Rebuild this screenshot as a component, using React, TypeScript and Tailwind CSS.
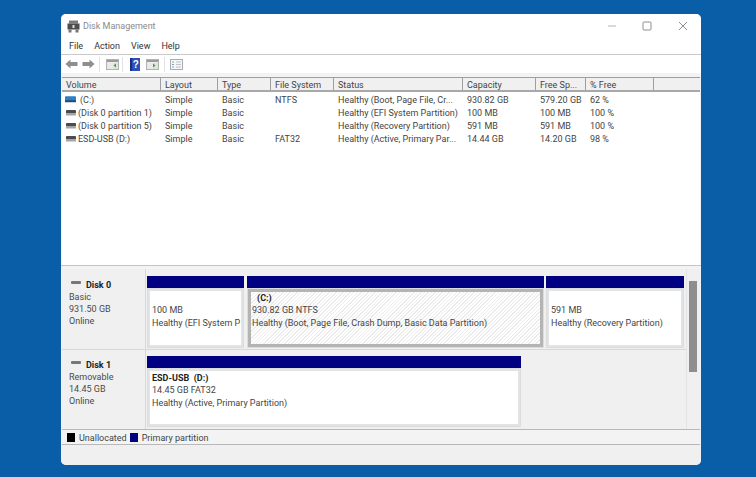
import React from "react";

const font = "[font-family:'Roboto','Noto_Sans',sans-serif]";

const cols = [
  { name: "Volume", w: "w-[99px]" },
  { name: "Layout", w: "w-[57px]" },
  { name: "Type", w: "w-[53px]" },
  { name: "File System", w: "w-[63px]" },
  { name: "Status", w: "w-[129px]" },
  { name: "Capacity", w: "w-[73px]" },
  { name: "Free Sp...", w: "w-[50px]" },
  { name: "% Free", w: "w-[68px]" },
];

const rows = [
  ["(C:)", "Simple", "Basic", "NTFS", "Healthy (Boot, Page File, Cr...", "930.82 GB", "579.20 GB", "62 %"],
  ["(Disk 0 partition 1)", "Simple", "Basic", "", "Healthy (EFI System Partition)", "100 MB", "100 MB", "100 %"],
  ["(Disk 0 partition 5)", "Simple", "Basic", "", "Healthy (Recovery Partition)", "591 MB", "591 MB", "100 %"],
  ["ESD-USB (D:)", "Simple", "Basic", "FAT32", "Healthy (Active, Primary Par...", "14.44 GB", "14.20 GB", "98 %"],
];

function DriveIcon({ blue }: { blue?: boolean }) {
  return (
    <svg width="10" height="6" viewBox="0 0 10 6" className={blue ? "shrink-0 -ml-[1px] mb-[3px] w-[11px] h-[7px]" : "shrink-0 mb-[1px]"}>
      <rect x="0" y="0" width="10" height="3.5" rx="0.8" fill={blue ? "#2f7fc4" : "#4c4c4c"} />
      <rect x="0" y="3.5" width="10" height="2" fill={blue ? "#1d4e80" : "#a5a5a5"} />
    </svg>
  );
}

function Arrow({ flip }: { flip?: boolean }) {
  return (
    <svg width="13" height="10" viewBox="0 0 13 10" className={flip ? "-scale-x-100" : ""}>
      <path d="M0.5 5 L5.5 0.5 V3 H12.5 V7 H5.5 V9.5 Z" fill="#8d8f8d" />
    </svg>
  );
}

function PaneIcon({ green }: { green: "l" | "r" }) {
  return (
    <svg width="13" height="11" viewBox="0 0 13 11">
      <rect x="0.5" y="0.5" width="12" height="10" fill="#eaeaea" stroke="#b0b0b0" />
      <rect x="1" y="1" width="11" height="2" fill="#9a9a9a" />
      <rect x="7" y="4" width="5" height="6" fill="#dfe5da" />
      <path d={green === "l" ? "M10 4.5 L7.5 6.5 L10 8.5 Z" : "M7 4.5 L9.5 6.5 L7 8.5 Z"} fill="#3da53d" />
    </svg>
  );
}

function HelpIcon() {
  return (
    <svg width="10" height="13" viewBox="0 0 10 13">
      <rect width="10" height="13" fill="#2c50b4" />
      <rect x="0" y="0" width="2" height="13" fill="#1b2f80" />
      <text x="5.8" y="10" textAnchor="middle" fontSize="10" fontWeight="700" fill="#ffffff" fontFamily="Liberation Sans">?</text>
    </svg>
  );
}

function ListIcon() {
  return (
    <svg width="13" height="11" viewBox="0 0 13 11">
      <rect x="0.5" y="0.5" width="12" height="10" fill="#f4f6f8" stroke="#a9adb2" />
      <path d="M2 3h2M2 5.5h2M2 8h2" stroke="#8aa0ba" />
      <path d="M6 3h5M6 5.5h5M6 8h5" stroke="#c0c3c7" />
    </svg>
  );
}

function AppIcon() {
  return (
    <svg width="13" height="13" viewBox="0 0 13 13">
      <rect x="2" y="0.5" width="9" height="3" fill="#7c7c7c" />
      <rect x="0.5" y="3.5" width="12" height="6" fill="#4d4d4d" />
      <rect x="1.5" y="9.5" width="3" height="3" fill="#777" />
      <rect x="8.5" y="9.5" width="3" height="3" fill="#777" />
      <rect x="5.5" y="5" width="2" height="3" fill="#ddd" />
    </svg>
  );
}

function Sep({ className }: { className: string }) {
  return <div className={`w-px h-[15px] bg-[#e2e2e2] ${className}`} />;
}

function Partition({
  w,
  hatched,
  lines,
  boxH,
}: {
  w: string;
  hatched?: boolean;
  lines: React.ReactNode;
  boxH: string;
}) {
  return (
    <div className={`${w} flex flex-col shrink-0`}>
      <div className="h-[11.5px] bg-[#000080]" />
      <div className={`${boxH} p-[1px] bg-[#dcdcdc]`}>
        <div
          className={
            hatched
              ? "h-full border-[3px] border-[#b4b4b4] px-[1px] bg-[repeating-linear-gradient(135deg,#ececec_0px,#ececec_1px,#ffffff_1px,#ffffff_2.5px)]"
              : "h-full bg-white border-[2px] border-[#e0e4e6] px-[2px] pt-[1px]"
          }
        >
          {lines}
        </div>
      </div>
    </div>
  );
}

function DiskLabel({ title, lines, top }: { title: string; lines: string[]; top: string }) {
  return (
    <div className={`w-[84px] shrink-0 bg-[#f0f0f0] border-r border-[#d8d8d8] pl-[7px] ${top} leading-[12px] text-[#4a4a4a]`}>
      <div className="flex items-center gap-[5px] font-bold text-[#222] h-[13px]">
        <svg width="10" height="4" viewBox="0 0 10 4" className="mb-[3px] ml-[2px]">
          <rect width="10" height="3" rx="1" fill="#777" />
        </svg>
        {title}
      </div>
      {lines.map((l) => (
        <div key={l}>{l}</div>
      ))}
    </div>
  );
}

export default function App() {
  return (
    <div className={`w-[756px] h-[477px] bg-[#0a5ea8] pt-[14px] pl-[61px] overflow-hidden ${font}`}>
      <div className="w-[640px] h-[451px] bg-[#f3f3f3] rounded-[5px] overflow-hidden flex flex-col text-[9px] text-[#444]">
        {/* Title bar */}
        <div className="h-[24px] bg-white flex items-center pl-[6px] shrink-0">
          <AppIcon />
          <span className="ml-[3px] pt-[1px] text-[#8a8a8a]">Disk Management</span>
          <div className="ml-auto flex items-center">
            <svg width="10" height="10" viewBox="0 0 10 10" className="mr-[25px]">
              <path d="M1 5h8" stroke="#b5b5b5" />
            </svg>
            <svg width="10" height="10" viewBox="0 0 10 10" className="mr-[26px]">
              <rect x="1" y="1" width="8" height="8" rx="1" fill="none" stroke="#8f8f8f" />
            </svg>
            <svg width="10" height="10" viewBox="0 0 10 10" className="mr-[13px]">
              <path d="M1 1l8 8M9 1l-8 8" stroke="#8f8f8f" />
            </svg>
          </div>
        </div>
        {/* Menu */}
        <div className="h-[17px] bg-white border-b border-[#c9c9c9] flex items-center pl-[8px] pt-[1px] gap-[11px] text-[#333] shrink-0">
          <span>File</span>
          <span>Action</span>
          <span>View</span>
          <span>Help</span>
        </div>
        {/* Toolbar */}
        <div className="h-[18px] bg-white flex items-center pl-[4px] shrink-0">
          <Arrow />
          <div className="w-[4px]" />
          <Arrow flip />
          <Sep className="ml-[4px] mr-[6px]" />
          <PaneIcon green="l" />
          <Sep className="ml-[3px] mr-[7px]" />
          <HelpIcon />
          <div className="w-[6px]" />
          <PaneIcon green="r" />
          <Sep className="ml-[5px] mr-[5px]" />
          <ListIcon />
        </div>
        <div className="h-[4px] bg-[#f3f3f3] shrink-0" />
        {/* List */}
        <div className="h-[188px] bg-white mx-px border-t border-[#9e9e9e] shrink-0">
          <div className="flex h-[14px] bg-[#f0f0f0] border-b-2 border-[#a8a8a8] leading-[15px]">
            {cols.map((c) => (
              <div key={c.name} className={`${c.w} shrink-0 border-r border-[#9e9e9e] pl-[4px] whitespace-nowrap overflow-hidden`}>
                {c.name}
              </div>
            ))}
          </div>
          <div className="pt-[2px]">
            {rows.map((r, i) => (
              <div key={r[0]} className="flex h-[13px] leading-[13px]">
                {r.map((cell, j) => (
                  <div key={j} className={`${cols[j].w} shrink-0 pl-[4px] whitespace-nowrap overflow-hidden ${j === 0 ? "flex items-center gap-[2px]" : ""}`}>
                    {j === 0 && <DriveIcon blue={i === 0} />}
                    {j === 0 && i === 0 ? <span className="ml-[2px]">{cell}</span> : cell}
                  </div>
                ))}
              </div>
            ))}
          </div>
        </div>
        <div className="h-[4px] bg-[#f3f3f3] border-t border-[#c4c4c4] shrink-0" />
        {/* Graphical pane */}
        <div className="h-[161px] flex mx-px border-b border-[#b8b8b8] bg-[#f0f0f0] shrink-0">
          <div className="w-[625px] flex flex-col border-r border-[#e4e4e4]">
            <div className="h-[81px] flex border-b border-[#d8d8d8]">
              <DiskLabel title="Disk 0" top="pt-[9px]" lines={["Basic", "931.50 GB", "Online"]} />
              <div className="flex pl-[1px] pt-[7px]">
                <Partition
                  w="w-[97px]"
                  boxH="h-[60px]"
                  lines={
                    <div className="whitespace-nowrap leading-[12.5px]">
                      <div>&nbsp;</div>
                      <div>100 MB</div>
                      <div>Healthy (EFI System P</div>
                    </div>
                  }
                />
                <div className="w-[3px] shrink-0" />
                <Partition
                  w="w-[297px]"
                  hatched
                  boxH="h-[60px]"
                  lines={
                    <div className="whitespace-nowrap leading-[12.5px]">
                      <div className="font-bold text-[#222] pl-[5px]">(C:)</div>
                      <div>930.82 GB NTFS</div>
                      <div>Healthy (Boot, Page File, Crash Dump, Basic Data Partition)</div>
                    </div>
                  }
                />
                <div className="w-[2px] shrink-0" />
                <Partition
                  w="w-[138px]"
                  boxH="h-[60px]"
                  lines={
                    <div className="whitespace-nowrap leading-[12.5px]">
                      <div>&nbsp;</div>
                      <div>591 MB</div>
                      <div>Healthy (Recovery Partition)</div>
                    </div>
                  }
                />
              </div>
            </div>
            <div className="flex-1 flex">
              <DiskLabel title="Disk 1" top="pt-[8px]" lines={["Removable", "14.45 GB", "Online"]} />
              <div className="flex pl-[1px] pt-[6px]">
                <Partition
                  w="w-[374px]"
                  boxH="h-[59px]"
                  lines={
                    <div className="whitespace-nowrap leading-[12.5px]">
                      <div className="font-bold text-[#222]">ESD-USB&nbsp;&nbsp;(D:)</div>
                      <div>14.45 GB FAT32</div>
                      <div>Healthy (Active, Primary Partition)</div>
                    </div>
                  }
                />
              </div>
            </div>
          </div>
          <div className="flex-1 pt-[12px] pl-[2px]">
            <div className="w-[8px] h-[91px] bg-[#8e8e8e]" />
          </div>
        </div>
        {/* Legend */}
        <div className="h-[15px] mx-px bg-[#f3f3f3] border-b border-[#b8b8b8] flex items-center pl-[5px] shrink-0 text-[#444]">
          <div className="w-[8px] h-[9px] bg-black mr-[4px]" />
          <span className="mr-[3px] pt-[4px]">Unallocated</span>
          <div className="w-[8px] h-[9px] bg-[#000080] mr-[4px]" />
          <span className="pt-[4px]">Primary partition</span>
        </div>
        <div className="flex-1 bg-[#f0f0f0]" />
      </div>
    </div>
  );
}
